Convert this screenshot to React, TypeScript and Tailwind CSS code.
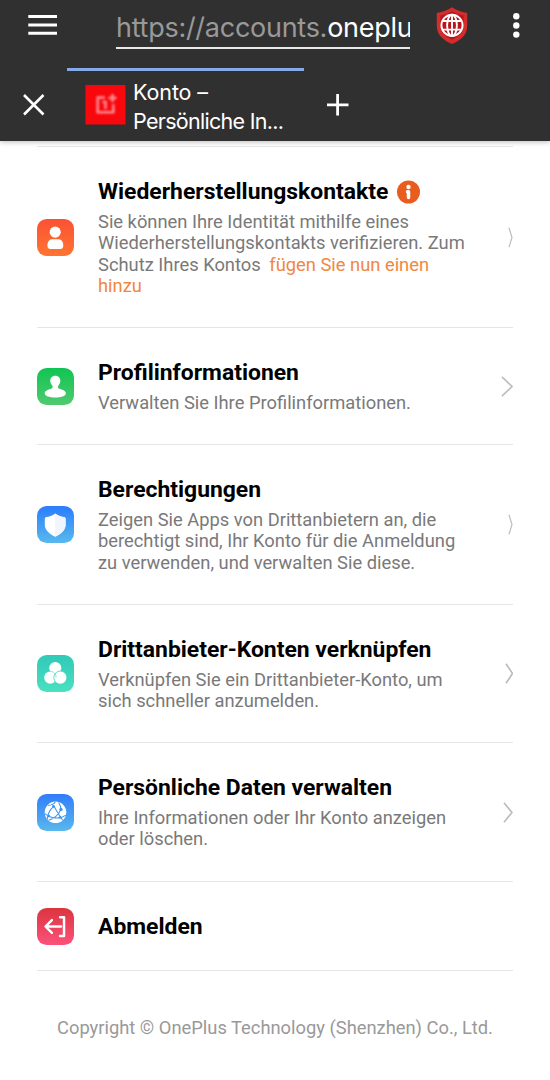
import type { ReactNode } from "react";

function Tile({ id, from, to, children }: { id: string; from: string; to: string; children: ReactNode }) {
  return (
    <svg viewBox="0 0 36 36" className="h-[37px] w-[37px] shrink-0" fill="none">
      <defs>
        <linearGradient id={id} x1="0" y1="0" x2="0" y2="1">
          <stop stopColor={from} />
          <stop offset="1" stopColor={to} />
        </linearGradient>
      </defs>
      <rect width="36" height="36" rx="9.5" fill={`url(#${id})`} />
      {children}
    </svg>
  );
}

const contactIcon = (
  <Tile id="contact" from="#fb5134" to="#ff7531">
    <circle cx="17.7" cy="12.8" r="5.4" fill="#fff" />
    <path d="M14.5 19.8h6.6c3 0 4.5 3 4.5 6.2 0 2-1 3.1-2.8 3.1H13c-2 0-2.9-1.1-2.9-3.1 0-3.2 1.4-6.2 4.4-6.2Z" fill="#fff" />
  </Tile>
);
const profileIcon = (
  <Tile id="profile" from="#10c453" to="#50ca70">
    <path d="M17.8 7.5c-3 0-4.9 2.2-4.9 5 0 2.1.9 3.3 1.9 4.5.8 1 .6 2.6-.8 3.1-3.4.9-6.5 2-6.5 4.5 0 2.7 4.2 4.1 10.3 4.1s10.3-1.4 10.3-4.1c0-2.5-3.1-3.6-6.5-4.5-1.4-.5-1.600-2.100-.8-3.100 1-1.200 1.900-2.400 1.900-4.500 0-2.800-1.900-5-4.900-5Z" fill="#fff" />
  </Tile>
);
const shieldIcon = (
  <Tile id="shield" from="#2b7dfb" to="#58b9ed">
    <path d="M17.700 7.200c2.800 2.300 6 3.100 8.500 3.600 1.200.2 1.600.8 1.600 2v5.700c0 5-4.700 8.700-10.100 11.500-5.400-2.800-10.100-6.500-10.100-11.500v-5.700c0-1.200.4-1.800 1.600-2 2.500-.5 5.700-1.300 8.500-3.600Z" fill="#fff" />
    <path d="M17.700 7.200c2.800 2.300 6 3.100 8.500 3.600 1.200.2 1.600.8 1.600 2v5.700c0 5-4.700 8.700-10.100 11.500Z" fill="#f1f6fd" />
  </Tile>
);
const linkIcon = (
  <Tile id="link" from="#31c9b8" to="#4be0c0">
    <circle cx="17.800" cy="12.600" r="5.900" fill="#fff" />
    <circle cx="12.900" cy="22" r="5.900" fill="#fff" />
    <circle cx="22.700" cy="22" r="6.400" fill="#fff" stroke="#40d4bd" strokeWidth=".8" />
    <path d="M13 16c2.800-.1 5.800 2 5.500 6" stroke="#40d4bd" strokeWidth=".6" />
  </Tile>
);
const dataIcon = (
  <Tile id="data" from="#317dfa" to="#59b8ed">
    <circle cx="18" cy="17.800" r="10.500" fill="#fff" />
    <g stroke="#3d94ee" strokeWidth="1">
      <path d="M10.500 11c3 0 5.500-.5 7.500-3.500M10 24.500c.5-5.500 2.500-9.500 6.500-12.500M16.500 12c2.500 4 4.500 8 8.500 13.500M7.800 19c6 5 14 6 20.500 1.500M23.300 15c-2 5-7 9.500-12 10.500M23.300 15c0-2-.8-4.500-2.300-7" />
    </g>
    <g fill="#3d94ee">
      <circle cx="16" cy="12" r="1.400" />
      <circle cx="23.300" cy="15" r="1.600" />
      <circle cx="11.500" cy="21.500" r="1.200" />
      <circle cx="22.500" cy="22.500" r="1.200" />
    </g>
  </Tile>
);
const logoutIcon = (
  <Tile id="logout" from="#dc343f" to="#fc527b">
    <path d="M22.500 9h3.800v18.200h-3.800M23.300 18H8.500M14.500 11.800 8.300 18l6.200 6.200" stroke="#fff" strokeWidth="2.400" strokeLinecap="round" strokeLinejoin="round" />
  </Tile>
);

function Chevron({ width }: { width: number }) {
  return (
    <svg width={width} height="21" viewBox={`0 0 ${width} 21`} fill="none" className="shrink-0">
      <path
        d={`M1 .8 L${width - 1} 10.500 L1 20.200`}
        stroke="#bdbdbd"
        strokeWidth={width > 8 ? 1.700 : 1.200}
      />
    </svg>
  );
}

type Item = { title: string; icon: ReactNode; lines: ReactNode[]; chevron: number; height: string; info?: boolean };

const items: Item[] = [
  {
    title: "Wiederherstellungskontakte",
    icon: contactIcon,
    info: true,
    chevron: 5,
    height: "h-[181px]",
    lines: [
      "Sie können Ihre Identität mithilfe eines",
      "Wiederherstellungskontakts verifizieren. Zum",
      <>Schutz Ihres Kontos <a className="ml-1 text-[#f18740]">fügen Sie nun einen</a></>,
      <a className="text-[#f18740]">hinzu</a>,
    ],
  },
  {
    title: "Profilinformationen",
    icon: profileIcon,
    chevron: 12,
    height: "h-[117px]",
    lines: ["Verwalten Sie Ihre Profilinformationen."],
  },
  {
    title: "Berechtigungen",
    icon: shieldIcon,
    chevron: 5,
    height: "h-[160px]",
    lines: [
      "Zeigen Sie Apps von Drittanbietern an, die",
      "berechtigt sind, Ihr Konto für die Anmeldung",
      "zu verwenden, und verwalten Sie diese.",
    ],
  },
  {
    title: "Drittanbieter-Konten verknüpfen",
    icon: linkIcon,
    chevron: 8.5,
    height: "h-[138px]",
    lines: ["Verknüpfen Sie ein Drittanbieter-Konto, um", "sich schneller anzumelden."],
  },
  {
    title: "Persönliche Daten verwalten",
    icon: dataIcon,
    chevron: 10,
    height: "h-[139px]",
    lines: ["Ihre Informationen oder Ihr Konto anzeigen", "oder löschen."],
  },
];

function Header() {
  return (
    <header className="h-[141px] bg-[#303030] font-[Inter,sans-serif] text-white shadow-[0_1px_5px_rgba(0,0,0,0.28)]">
      <div className="flex h-[68px] items-start">
        <svg width="30" height="22" viewBox="0 0 30 22" className="ml-7 mt-[14px] shrink-0">
          <path d="M.3 2.500H29M.3 11H29M.3 19.200H29" stroke="#fff" strokeWidth="2.900" />
        </svg>
        <div className="ml-[58px] mt-[7px] h-[42px] w-[294px] shrink-0 overflow-hidden whitespace-nowrap border-b-2 border-[#e8e8e8] text-[27px] leading-[41px] tracking-[-0.270px]">
          <span className="text-[#999]">https://accounts.</span>oneplu
        </div>
        <svg width="32" height="38" viewBox="0 0 32 38" className="ml-[26px] mt-[7px] shrink-0" fill="none">
          <path d="M16 .3C21 3.500 26 5.200 31.200 6v13c0 8.500-6 14-15.200 18C6.800 33 .8 27.500.8 19V6C6 5.200 11 3.500 16 .3Z" fill="#d52d2c" />
          <path d="M16 4.200c4 2.100 7.500 3.400 11.600 4.200V19c0 6.500-4.400 10.500-11.600 13.700C8.800 29.500 4.400 25.500 4.400 19V8.400C8.500 7.600 12 6.300 16 4.200Z" fill="#b9161c" />
          <g stroke="#fff" strokeWidth="1.900">
            <circle cx="16" cy="18.300" r="10.600" />
            <ellipse cx="16" cy="18.300" rx="4.900" ry="10.600" />
            <path d="M6.800 14h18.400M6.800 22.600h18.400M16 8v21" />
          </g>
        </svg>
        <svg width="10" height="28" viewBox="0 0 10 28" className="ml-[43px] mt-3 shrink-0" fill="#fff">
          <circle cx="5.300" cy="4.300" r="3.200" />
          <circle cx="5.300" cy="13.500" r="3.200" />
          <circle cx="5.300" cy="22.600" r="3.200" />
        </svg>
      </div>
      <div className="flex h-[73px]">
        <div className="flex w-[67px] shrink-0">
          <svg width="24" height="24" viewBox="0 0 24 24" className="ml-[22px] mt-[25px]">
            <path d="m2 2 19.500 19.500M21.500 2 2 21.500" stroke="#fff" strokeWidth="2.600" />
          </svg>
        </div>
        <div className="flex w-[237px] shrink-0 border-t-[3px] border-[#86aae8] pl-[18px]">
          <svg width="41" height="41" viewBox="0 0 41 41" className="mt-[13px] shrink-0" fill="none">
            <path d="M.5 1h40v39.500H.5z" fill="#f8070d" />
            <g stroke="#ff8d92" strokeWidth="2.600" className="blur-[1px]">
              <path d="M20 13.500h-7.300v14.800h15.600v-8M27.500 10v8M23.500 14h8M17.500 18h3v7" />
            </g>
          </svg>
          <div className="ml-[7px] mt-[7px] whitespace-nowrap text-[21.500px] leading-[29px] tracking-[-0.700px]">
            <span className="tracking-[-0.100px]">Konto –</span><br />Persönliche In...
          </div>
        </div>
        <svg width="24" height="24" viewBox="0 0 24 24" className="ml-[22px] mt-[25px] shrink-0">
          <path d="M1 11.800h21.500M11.600 1v21.500" stroke="#fff" strokeWidth="2.800" />
        </svg>
      </div>
    </header>
  );
}

export default function App() {
  return (
    <div className="h-[1080px] w-[550px] overflow-hidden bg-white font-[Roboto,sans-serif]">
      <Header />
      <main className="ml-[37px] mt-[5px] w-[476px]">
        {items.map((item) => (
          <section key={item.title} className={`flex items-center border-t border-[#e6e6e6] ${item.height}`}>
            {item.icon}
            <div className="ml-6 h-full w-[380px] whitespace-nowrap pt-[30px]">
              <h2 className="flex h-[30px] items-center text-[22.900px] font-bold leading-[30px] text-black">
                {item.title}
                {item.info && (
                  <svg width="24" height="24" viewBox="0 0 24 24" className="ml-[8px]">
                    <circle cx="12.500" cy="12" r="11.500" fill="#e85c20" />
                    <circle cx="12.500" cy="7" r="2.200" fill="#fff" />
                    <path d="M11.500 11.800h1v5.800" stroke="#fff" strokeWidth="3.500" strokeLinecap="round" strokeLinejoin="round" fill="none" />
                  </svg>
                )}
              </h2>
              <p className="mt-1 text-[18.330px] leading-[21.330px] text-[#797979]">
                {item.lines.map((line, i) => (
                  <span key={i} className="block">{line}</span>
                ))}
              </p>
            </div>
            <div className="flex flex-1 justify-end">
              <Chevron width={item.chevron} />
            </div>
          </section>
        ))}
        <section className="flex h-[90px] items-center border-y border-[#e6e6e6]">
          {logoutIcon}
          <h2 className="ml-6 pt-[2px] text-[22.900px] font-bold text-black">Abmelden</h2>
        </section>
      </main>
      <footer className="mt-[43px] whitespace-nowrap text-center text-[18.330px] leading-7 text-[#999]">
        Copyright © OnePlus Technology (Shenzhen) Co., Ltd.
      </footer>
    </div>
  );
}
